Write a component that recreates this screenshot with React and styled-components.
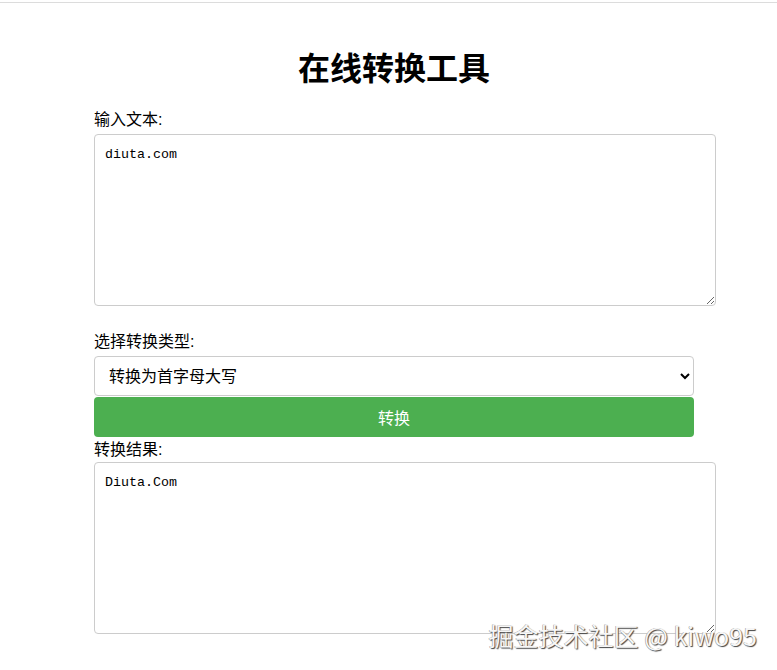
import React, { useState } from 'react';
import styled, { createGlobalStyle } from 'styled-components';

const GlobalStyle = createGlobalStyle`
  body {
    margin: 0;
    background: #fff;
    font-family: 'Liberation Sans', 'Noto Sans CJK SC', sans-serif;
    color: #000;
  }
`;

const toTitleCase = str =>
  str.replace(/\b([a-z])/gi, ch => ch.toUpperCase());

const App = () => {
  const [text, setText] = useState('diuta.com');
  const [type, setType] = useState('title');
  const [result, setResult] = useState('Diuta.Com');

  const onConvert = () => {
    if (type === 'upper') setResult(text.toUpperCase());
    else if (type === 'lower') setResult(text.toLowerCase());
    else setResult(toTitleCase(text));
  };

  return (
    <StPage>
      <GlobalStyle />
      <TopRule />
      <Container>
        <Title>在线转换工具</Title>
        <Label htmlFor='input'>输入文本:</Label>
        <TextBox
          id='input'
          value={text}
          onChange={e => setText(e.target.value)}
        />
        <Label htmlFor='type'>选择转换类型:</Label>
        <Select id='type' value={type} onChange={e => setType(e.target.value)}>
          <option value='title'>转换为首字母大写</option>
          <option value='upper'>转换为大写</option>
          <option value='lower'>转换为小写</option>
        </Select>
        <Button onClick={onConvert}>转换</Button>
        <Label htmlFor='output' $tight>转换结果:</Label>
        <TextBox id='output' value={result} readOnly />
      </Container>
      <Watermark>掘金技术社区 @ kiwo95</Watermark>
    </StPage>
  );
};

export default App;

const StPage = styled.div`
  position: relative;
  width: 777px;
  height: 670px;
  overflow: hidden;
`;

const TopRule = styled.div`
  height: 1px;
  margin-top: 2px;
  background: #dcdcdc;
`;

const Container = styled.div`
  width: 600px;
  margin-left: 94px;
  padding-top: 43px;
`;

const Title = styled.h1`
  margin: 0 0 17px;
  text-align: center;
  font-size: 32px;
  font-weight: bold;
  line-height: 46px;
`;

const Label = styled.label`
  display: block;
  font-size: 16px;
  line-height: 22px;
  margin-top: ${p => (p.$tight ? '2px' : '0')};
  margin-bottom: ${p => (p.$tight ? '1px' : '3px')};
`;

const TextBox = styled.textarea`
  display: block;
  width: 100%;
  height: 148px;
  margin: 0 0 25px;
  padding: 12px 10px 10px;
  border: 1px solid #ccc;
  border-radius: 4px;
  font-family: 'Liberation Mono', monospace;
  font-size: 13.33px;
  color: #000;
  background: #fff;
`;

const Select = styled.select`
  display: block;
  width: 100%;
  height: 40px;
  padding: 0 8px 0 10px;
  border: 1px solid #ccc;
  border-radius: 4px;
  font-family: 'Liberation Sans', 'Noto Sans CJK SC', sans-serif;
  font-size: 16px;
  color: #000;
  background: #fff;
`;

const Button = styled.button`
  display: block;
  width: 100%;
  height: 40px;
  margin-top: 1px;
  border: none;
  border-radius: 4px;
  background: #4caf50;
  color: #fff;
  font-family: 'Liberation Sans', 'Noto Sans CJK SC', sans-serif;
  font-size: 16px;
  cursor: pointer;
`;

const Watermark = styled.div`
  position: absolute;
  right: 20px;
  bottom: 20px;
  font-family: 'Noto Sans CJK SC', sans-serif;
  font-size: 25px;
  line-height: 30px;
  color: #f6f6f6;
  text-shadow: 1px 1px 1px #444, -0.5px -0.5px 0 #999;
`;
